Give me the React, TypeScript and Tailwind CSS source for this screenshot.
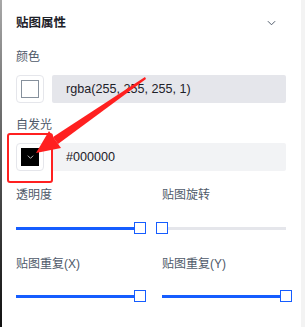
import React from "react";

const font = "font-['Liberation_Sans','Noto_Sans_CJK_SC',sans-serif]";

function Chevron({ className }: { className?: string }) {
  return (
    <svg viewBox="0 0 10 6" className={className} fill="none">
      <path d="M1 1l4 4 4-4" stroke="currentColor" strokeWidth="1.1" />
    </svg>
  );
}

function Label({ children, className = "" }: { children: React.ReactNode; className?: string }) {
  return (
    <div className={`h-[22px] flex items-center text-[12px] leading-none text-[#4e5969] ${className}`}>
      {children}
    </div>
  );
}

function Slider({ value }: { value: number }) {
  return (
    <div className="relative h-[12px]">
      <div className="absolute left-0 right-0 top-[5px] h-[3px] bg-[#e5e6eb]" />
      <div className="absolute left-0 top-[5px] h-[3px] bg-[#165dff]" style={{ width: `${value}%` }} />
      <div
        className="absolute top-0 w-[12px] h-[12px] bg-white border-[1.5px] border-[#165dff]"
        style={{ left: `calc(${value}% - 6px)` }}
      />
    </div>
  );
}

function ColorRow({ swatch, value, inputBg }: { swatch: React.ReactNode; value: string; inputBg: string }) {
  return (
    <div className="flex h-[28px] gap-[8px]">
      <div className="w-[28px] h-[28px] shrink-0 rounded-[4px] border border-[#e5e6eb] bg-white flex items-center justify-center">
        {swatch}
      </div>
      <div className={`flex-1 rounded-[2px] ${inputBg} flex items-center pl-[14px] text-[12.6px] text-[#1d2129]`}>
        {value}
      </div>
    </div>
  );
}

export default function App() {
  return (
    <div className={`relative flex w-[305px] h-[327px] bg-white ${font}`}>
      <div className="w-[2px] shrink-0 bg-gradient-to-b from-[#a8a8a8] to-[#111]" />
      <div className="flex-1 pl-[14px] pr-[15px]">
        <div className="h-[46px] flex items-center justify-between">
          <span className="text-[12.5px] font-bold text-[#1d2129]">贴图属性</span>
          <Chevron className="w-[9px] h-[6px] mr-[10px] text-[#4e5969]" />
        </div>

        <Label>颜色</Label>
        <div className="mt-[7px]">
          <ColorRow
            inputBg="bg-[#e5e6eb]"
            value="rgba(255, 255, 255, 1)"
            swatch={<div className="w-[18px] h-[18px] border border-[#86909c] bg-white" />}
          />
        </div>

        <Label className="mt-[11px]">自发光</Label>
        <div className="mt-[7px]">
          <ColorRow
            inputBg="bg-[#f2f3f5]"
            value="#000000"
            swatch={
              <div className="w-[18px] h-[18px] bg-black flex items-center justify-center">
                <Chevron className="w-[7px] h-[4px] text-white" />
              </div>
            }
          />
        </div>

        <div className="grid grid-cols-2 gap-x-[22px] mt-[13px]">
          <div>
            <Label>透明度</Label>
            <div className="mt-[16px]">
              <Slider value={100} />
            </div>
          </div>
          <div>
            <Label>贴图旋转</Label>
            <div className="mt-[16px]">
              <Slider value={0} />
            </div>
          </div>
          <div>
            <Label className="mt-[19px]">贴图重复(X)</Label>
            <div className="mt-[15px]">
              <Slider value={100} />
            </div>
          </div>
          <div>
            <Label className="mt-[19px]">贴图重复(Y)</Label>
            <div className="mt-[15px]">
              <Slider value={100} />
            </div>
          </div>
        </div>
      </div>
      <div className="w-[4px] shrink-0 bg-[#f3f3f3]" />

      {/* annotation */}
      <div className="absolute left-[7px] top-[133px] w-[46px] h-[50px] border-2 border-[#ff2020] rounded-[3px] pointer-events-none" />
      <svg className="absolute inset-0 pointer-events-none" width="305" height="327" viewBox="0 0 305 327">
        <polygon points="145,77 146,79 58,144 53,137" fill="#ff2020" />
        <polygon points="36,153 49,131 61,148" fill="#ff2020" />
      </svg>
    </div>
  );
}
